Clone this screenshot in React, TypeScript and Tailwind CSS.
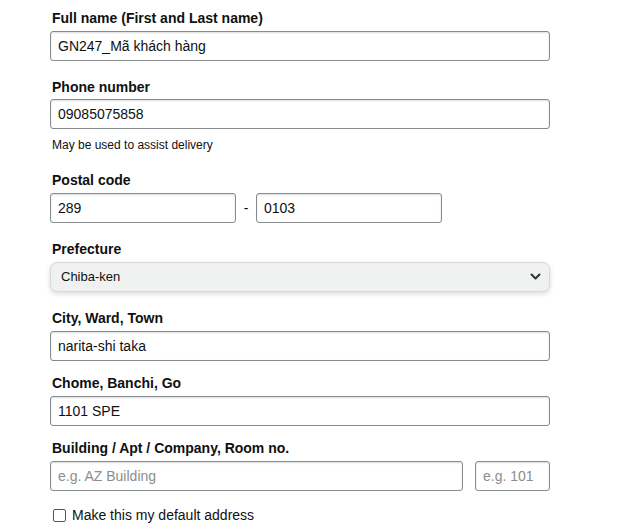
import React from 'react';

const font = { fontFamily: '"Liberation Sans", Arial, sans-serif' };

const inputCls =
  'h-[30px] w-full rounded-[3px] border border-[#888c8c] bg-white px-[7px] text-[14px] text-[#0f1111] outline-none placeholder:text-[#8a8d8d] shadow-[inset_0_1px_2px_rgba(15,17,17,0.15)]';

const Label: React.FC<{ children: React.ReactNode }> = ({ children }) => (
  <label className="block h-[19px] pl-[2px] text-[14px] font-bold leading-[19px] text-[#0f1111]">{children}</label>
);

export default function App() {
  return (
    <div className="min-h-[532px] w-[634px] bg-white pt-[9px]" style={font}>
      <div className="ml-[50px] w-[500px]">
        <Label>Full name (First and Last name)</Label>
        <input className={`${inputCls} mt-[3px]`} defaultValue="GN247_Mã khách hàng" />

        <div className="mt-[17px]">
          <Label>Phone number</Label>
          <input className={`${inputCls} mt-[2px]`} defaultValue="09085075858" />
          <p className="mt-[9px] pl-[2px] text-[12px] leading-[14px] text-[#0f1111]">May be used to assist delivery</p>
        </div>

        <div className="mt-[19px]">
          <Label>Postal code</Label>
          <div className="mt-[3px] flex items-center">
            <input className={`${inputCls} !w-[186px]`} defaultValue="289" />
            <span className="w-[20px] text-center text-[14px] text-[#0f1111]">-</span>
            <input className={`${inputCls} !w-[186px]`} defaultValue="0103" />
          </div>
        </div>

        <div className="mt-[17px]">
          <Label>Prefecture</Label>
          <div className="relative mt-[3px]">
            <select
              className="h-[30px] w-full appearance-none rounded-[7px] border border-[#d5d9d9] bg-[#f0f2f2] px-[10px] text-[13px] text-[#0f1111] shadow-[0_2px_5px_rgba(15,17,17,0.15)] outline-none"
              defaultValue="Chiba-ken"
            >
              <option>Chiba-ken</option>
            </select>
            <svg
              className="pointer-events-none absolute right-[9px] top-[10px]"
              width="11"
              height="9"
              viewBox="0 0 11 9"
              fill="none"
            >
              <path d="M1.5 2.5 L5.5 6.5 L9.5 2.5" stroke="#333" strokeWidth="2" strokeLinecap="round" strokeLinejoin="round" />
            </svg>
          </div>
        </div>

        <div className="mt-[17px]">
          <Label>City, Ward, Town</Label>
          <input className={`${inputCls} mt-[3px]`} defaultValue="narita-shi taka" />
        </div>

        <div className="mt-[13px]">
          <Label>Chome, Banchi, Go</Label>
          <input className={`${inputCls} mt-[3px]`} defaultValue="1101 SPE" />
        </div>

        <div className="mt-[13px]">
          <Label>Building / Apt / Company, Room no.</Label>
          <div className="mt-[3px] flex gap-[12px]">
            <input className={`${inputCls} flex-1`} placeholder="e.g. AZ Building" />
            <input className={`${inputCls} !w-[75px] shrink-0`} placeholder="e.g. 101" />
          </div>
        </div>

        <label className="mt-[14px] flex items-center gap-[6px] pl-[3px] text-[14px] text-[#0f1111]">
          <input type="checkbox" className="h-[13px] w-[13px] appearance-none rounded-[2px] border border-[#555] bg-white" />
          Make this my default address
        </label>
      </div>
    </div>
  );
}
